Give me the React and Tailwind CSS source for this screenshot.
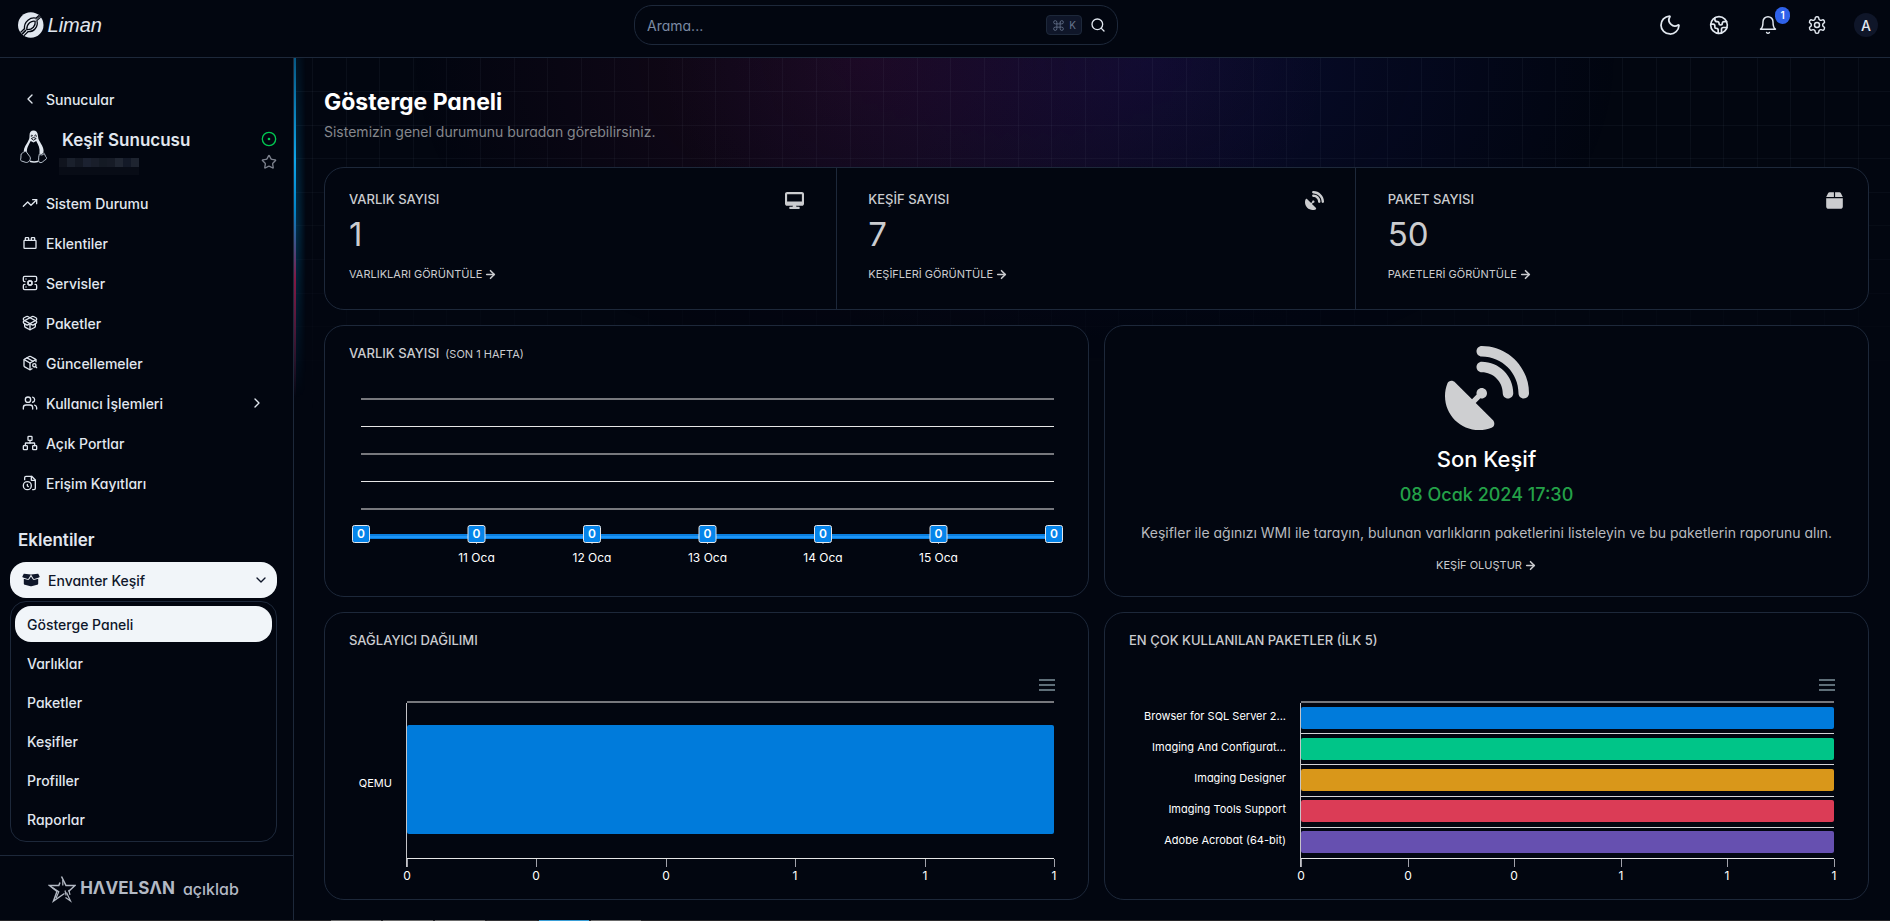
import React from "react";
import {
  ArrowRight, ChevronDown, ChevronLeft, ChevronRight, Command, Earth, Moon,
  Network, PackageSearch, Search, ServerCog, Star, ToyBrick, TrendingUp, Users,
} from "lucide-react";
import { FaBox, FaBoxOpen, FaDesktop, FaSatelliteDish } from "react-icons/fa6";

function Line({ size = 16, width = 2, className, children }) {
  return (
    <svg width={size} height={size} viewBox="0 0 24 24" fill="none" stroke="currentColor" strokeWidth={width}
      strokeLinecap="round" strokeLinejoin="round" className={className} aria-hidden="true">
      {children}
    </svg>
  );
}

const PackageOpenIcon = (p) => (
  <Line {...p}>
    <path d="M20.91 8.84 8.56 2.23a1.93 1.93 0 0 0-1.81 0L3.1 4.13a2.12 2.12 0 0 0-.05 3.69l12.22 6.93a2 2 0 0 0 1.94 0L21 12.51a2.12 2.12 0 0 0-.09-3.67Z" />
    <path d="m3.09 8.84 12.35-6.61a1.93 1.93 0 0 1 1.81 0l3.65 1.9a2.12 2.12 0 0 1 .1 3.69L8.73 14.75a2 2 0 0 1-1.94 0L3 12.51a2.12 2.12 0 0 1 .09-3.67Z" />
    <path d="M12 22V13" />
    <path d="M20 13.5v3.37a2.06 2.06 0 0 1-1.11 1.83l-6 3.08a1.93 1.93 0 0 1-1.78 0l-6-3.08A2.06 2.06 0 0 1 4 16.87V13.5" />
  </Line>
);

const FileClockIcon = (p) => (
  <Line {...p}>
    <path d="M16 22h2a2 2 0 0 0 2-2V7.5L14.5 2H6a2 2 0 0 0-2 2v3" />
    <path d="M14 2v6h6" />
    <circle cx="8" cy="16" r="6" />
    <path d="M9.5 17.5 8 16.25V14" />
  </Line>
);

const BellIcon = (p) => (
  <Line {...p}>
    <path d="M6 8a6 6 0 0 1 12 0c0 7 3 9 3 9H3s3-2 3-9" />
    <path d="M10.3 21a1.94 1.94 0 0 0 3.4 0" />
  </Line>
);

const GearIcon = (p) => (
  <Line {...p}>
    <path d="M12.22 2h-.44a2 2 0 0 0-2 2v.18a2 2 0 0 1-1 1.73l-.43.25a2 2 0 0 1-2 0l-.15-.08a2 2 0 0 0-2.73.73l-.22.38a2 2 0 0 0 .73 2.73l.15.1a2 2 0 0 1 1 1.72v.51a2 2 0 0 1-1 1.74l-.15.09a2 2 0 0 0-.73 2.73l.22.38a2 2 0 0 0 2.73.73l.15-.08a2 2 0 0 1 2 0l.43.25a2 2 0 0 1 1 1.73V20a2 2 0 0 0 2 2h.44a2 2 0 0 0 2-2v-.18a2 2 0 0 1 1-1.73l.43-.25a2 2 0 0 1 2 0l.15.08a2 2 0 0 0 2.73-.73l.22-.39a2 2 0 0 0-.73-2.73l-.15-.08a2 2 0 0 1-1-1.74v-.5a2 2 0 0 1 1-1.74l.15-.09a2 2 0 0 0 .73-2.73l-.22-.38a2 2 0 0 0-2.73-.73l-.15.08a2 2 0 0 1-2 0l-.43-.25a2 2 0 0 1-1-1.73V4a2 2 0 0 0-2-2z" />
    <circle cx="12" cy="12" r="3" />
  </Line>
);

function LimanMark() {
  return (
    <svg width="32" height="32" viewBox="0 0 32 32" aria-hidden="true">
      <defs><clipPath id="disc"><circle cx="16" cy="16" r="16" /></clipPath></defs>
      <circle cx="16" cy="16" r="16" fill="#e1e7ef" />
      <g clipPath="url(#disc)" fill="none" stroke="#020610" strokeWidth="1.600" strokeLinejoin="round">
        <path d="M2.500 26 8 20.800" />
        <path d="M4.500 28 10 22.500" strokeWidth="2" />
        <path d="M7 30 12.500 24.500" />
        <path d="M8.300 21.500c-.8-4.700 1-8.800 4.200-11.500 3.300-2.700 7-3.200 10-2.500L27 3.500" />
        <path d="M12 24.300c4 .4 7.300-.9 9.500-3.600 2.600-3 3.200-6.700 2.200-10.200L29 5.500" />
        <path d="M11 21.800c-.2-3.800 1.200-6.600 3.500-8.600 2.200-1.800 4.800-2.400 7-1.900.4 2.800-.3 5.400-2.200 7.500-2 2.200-4.800 3.300-8.300 3z" />
        <path d="M22 9.500 28 4.500" strokeWidth="1" />
      </g>
    </svg>
  );
}

function Tux() {
  return (
    <svg width="27" height="34" viewBox="0 0 27 34" aria-hidden="true">
      <path d="M9.500 5.500C9.500 2 11 .5 13.500.5S17.800 2.300 18 6c.1 3.500 1.500 5 3 7.700 1.600 2.800 3.200 5.300 2.400 9.300l-2.600 1.500-1.300-1.500c.6-4.500-1-8-3.300-12l-2.700 1.500-2.800-1.500C8.500 15.500 6.500 18 7 22l-1.300-.7-2-.1c.3-4.200 2.600-6.400 4-9.200C9 9.500 9.600 8.500 9.500 5.500z" fill="#e1e7ef" />
      <path d="M11.400 6.800c-.6-1.800.9-2.500 1.300-.6M14.500 6.300c.4-2.100 2.300-1.500 1.700.6M11.300 8.500l2.300-1 2.600 1-2.600 1.700z" fill="none" stroke="#020610" strokeWidth=".9" />
      <path d="M3.500 22.200 5.700 21l4.200 5.700c1 1.500.4 3.300-.9 4.500-1 1-2 1.500-3.200 1.200L1.500 31C.2 30.400.5 29.500.9 28c.3-1.500-.2-3 .3-4 .5-.8 1.600-.9 2.300-1.800z" fill="none" stroke="#cbd5e1" strokeWidth=".9" />
      <path d="M19.400 23.800c-.7 2.200-.9 4.500-.8 6.700.1 2 2 2.800 3.700 1.600 1.200-1.200 2.700-2 3.800-2.900 1-.9.4-1.700-.4-2.600-.9-1-.6-2.300-1.500-3.200-1.400 2-3.500 2.100-4.800.4z" fill="none" stroke="#cbd5e1" strokeWidth=".9" />
      <path d="M9.800 31.300c2.800.9 5.800.9 8.600 0" stroke="#e1e7ef" strokeWidth="1.500" fill="none" />
    </svg>
  );
}

function BrandStar() {
  return (
    <svg width="28" height="28" viewBox="0 0 28 28" fill="none" stroke="#b3b9c4" strokeWidth="1.500" aria-hidden="true">
      <path d="M13.500 1.500 18 10.500h9l-6.500 6" />
      <path d="M12 7.500 10.800 10.500H1.500l7.500 6L5.500 26l8-5.500 3-2" />
      <path d="M18.500 17.500 22.500 26l-5-3.500M14.800 5v5.500M4 12.200l6.800 4.500L8 23.200" strokeWidth="1.200" />
      <path d="m20.800 14.800 1.200 5M17 15.500l1.200 5" strokeWidth="1.200" />
    </svg>
  );
}

const nav = [
  { label: "Sistem Durumu", icon: TrendingUp },
  { label: "Eklentiler", icon: ToyBrick },
  { label: "Servisler", icon: ServerCog },
  { label: "Paketler", icon: PackageOpenIcon },
  { label: "Güncellemeler", icon: PackageSearch },
  { label: "Kullanıcı İşlemleri", icon: Users, more: true },
  { label: "Açık Portlar", icon: Network },
  { label: "Erişim Kayıtları", icon: FileClockIcon },
];

const subNav = ["Gösterge Paneli", "Varlıklar", "Paketler", "Keşifler", "Profiller", "Raporlar"];

const maskTiles = [
  "bg-[#10141e]", "bg-[#1a202c]", "bg-[#131823]", "bg-[#1b2130]", "bg-[#191e2a]",
  "bg-[#141a24]", "bg-[#161b26]", "bg-[#202632]", "bg-[#131927]", "bg-[#1e2430]",
];

function Header() {
  return (
    <header className="flex h-[58px] shrink-0 items-start justify-between border-b border-[#1d283a] pr-1 pl-[18px]">
      <a href="#home" aria-label="Liman" className="flex w-[84px] items-center gap-1 pt-[9px] text-[#e1e7ef]">
        <LimanMark />
        <span className="font-['Liberation_Sans_Narrow','Liberation_Sans',sans-serif] text-[20px] leading-8 italic">Liman</span>
      </a>
      <label className="mt-[5px] flex h-10 w-[484px] items-center rounded-[18px] border border-[#1d283a] pr-[11px] pl-3">
        <input type="text" aria-label="Arama" placeholder="Arama..."
          className="min-w-0 flex-1 bg-transparent text-[14px] text-slate-200 outline-none placeholder:text-[#7b8aa3]" />
        <kbd className="mr-2 flex h-5 w-9 items-center justify-center gap-1 rounded border border-[#1d283a] bg-[#0f1629] text-[#66748c]">
          <Command size={13} strokeWidth={1.5} />
          <span className="font-['Inter',sans-serif] text-[10px]">K</span>
        </kbd>
        <Search size={16} className="text-[#e1e7ef]" />
      </label>
      <div className="flex items-center gap-[9px] pt-[5px] text-[#e1e7ef]">
        <button aria-label="Tema" className="grid size-10 place-items-center"><Moon size={24} strokeWidth={1.75} /></button>
        <button aria-label="Dil" className="grid size-10 place-items-center"><Earth size={20} /></button>
        <button aria-label="Bildirimler" className="relative grid size-10 place-items-center">
          <BellIcon size={20} width={1.75} />
          <span className="absolute top-0.5 -right-0.5 grid h-[17px] w-[15px] place-items-center rounded-full bg-[#2f62ea] text-[10px] font-semibold text-white">1</span>
        </button>
        <button aria-label="Ayarlar" className="grid size-10 place-items-center"><GearIcon size={20} width={1.75} /></button>
        <button aria-label="Hesap" className="grid size-10 place-items-center">
          <span className="grid size-6 place-items-center rounded-full bg-[#0f1629] text-[14px] font-medium">A</span>
        </button>
      </div>
    </header>
  );
}

function Sidebar() {
  return (
    <aside className="flex w-[294px] shrink-0 flex-col border-r border-[#1d283a] text-[14px] font-medium text-[#e1e7ef]">
      <div className="flex-1 pt-[23px] pr-4 pl-2.5">
        <a href="#sunucular" className="flex h-9 items-center gap-2 px-3"><ChevronLeft size={16} />Sunucular</a>
        <div className="mt-[13px] flex pl-2.5">
          <Tux />
          <div className="ml-3 flex-1">
            <h2 className="pl-[3px] text-[17px] leading-5 font-semibold">Keşif Sunucusu</h2>
            <div className="mt-2 flex">
              {maskTiles.map((c, i) => <span key={i} className={"h-[9px] w-2 " + c} />)}
            </div>
            <div className="h-2 w-20 bg-[#080c16]" />
          </div>
          <div className="flex w-4 flex-col gap-[7px]">
            <Line className="mt-px text-green-500"><circle cx="12" cy="12" r="10" /><circle cx="12" cy="12" r="1" /></Line>
            <Star size={16} className="text-[#7c818d]" />
          </div>
        </div>
        <nav className="mt-2.5 flex flex-col gap-1">
          {nav.map(({ label, icon: Icon, more }) => (
            <a key={label} href="#nav" className="flex h-9 items-center gap-2 px-3">
              <Icon size={16} />
              <span className="flex-1">{label}</span>
              {more && <ChevronRight size={16} />}
            </a>
          ))}
        </nav>
        <h3 className="mt-[25px] px-2 text-[17px] leading-7 font-semibold">Eklentiler</h3>
        <button className="mt-2 flex h-9 w-full items-center rounded-2xl bg-[#f1f5f9] px-3 text-left text-[#0f172a]">
          <FaBoxOpen size={18} />
          <span className="flex-1 pl-2">Envanter Keşif</span>
          <ChevronDown size={16} className="-mr-1" />
        </button>
        <nav className="mt-[3px] flex flex-col gap-[3px] rounded-2xl border border-[#1d283a] p-1">
          {subNav.map((label, i) => (
            <a key={label} href="#sub" className={i === 0
              ? "flex h-9 items-center rounded-2xl bg-[#f1f5f9] px-3 text-[#0f172a]"
              : "flex h-9 items-center px-3"}>{label}</a>
          ))}
        </nav>
      </div>
      <footer className="flex h-[65px] items-center justify-center gap-1 border-t border-[#1d283a] pt-px pr-1.5 text-[#b3b9c4]">
        <BrandStar />
        <span className="text-[17px] font-bold">HΛVELSΛN</span>
        <span className="ml-1 text-[16px] font-medium">açıklab</span>
      </footer>
    </aside>
  );
}

function Backdrop() {
  return (
    <div className="pointer-events-none absolute inset-0 -z-10 overflow-hidden" aria-hidden="true">
      <div className="absolute inset-x-0 top-0 h-[340px] bg-[radial-gradient(ellipse_460px_320px_at_36%_0%,rgba(190,24,93,0.13),transparent),radial-gradient(ellipse_480px_330px_at_53%_0%,rgba(49,46,229,0.15),transparent)] mask-[linear-gradient(to_bottom,black_30%,transparent)]" />
      <svg className="absolute inset-x-0 top-0 h-[360px] w-full mask-[linear-gradient(to_bottom,black_20%,transparent)]">
        <defs>
          <pattern id="grid" x="18" y="33" width="168" height="168" patternUnits="userSpaceOnUse">
            <path d="M.5 0v168M34.500 0v168M67.500 0v168M101.500 0v168M134.500 0v168M0 .5h168M0 34.500h168M0 67.500h168M0 101.500h168M0 134.500h168" stroke="#94a3b8" strokeOpacity=".06" />
          </pattern>
        </defs>
        <rect width="100%" height="100%" fill="url(#grid)" />
      </svg>
      <div className="absolute top-0 left-0 h-[340px] w-3 bg-linear-to-b from-sky-500/10 via-sky-500/30 to-transparent mask-[linear-gradient(to_right,black,transparent)]" />
      <div className="absolute top-0 left-0 h-[340px] w-0.5 bg-[linear-gradient(to_bottom,#075985,#0ea5e9_30%,#0284c7_45%,#831843_65%,transparent)]" />
    </div>
  );
}

function MoreLink({ children }) {
  return (
    <a href="#detay" className="inline-flex items-center gap-0.5 text-[11px] leading-4 text-[#cbcccf]">
      {children}<ArrowRight size={13} strokeWidth={3} />
    </a>
  );
}

function Stat({ label, value, link, icon: Icon, className }) {
  return (
    <div className={"flex justify-between pt-[23px] " + className}>
      <div>
        <h2 className="text-[13px] leading-4 font-medium text-[#cbcccf]">{label}</h2>
        <p className="mt-[7px] text-[33px] leading-10 text-[#cbcccf]">{value}</p>
        <div className="mt-3 flex"><MoreLink>{link}</MoreLink></div>
      </div>
      <Icon size={19} className="text-[#cbcccf]" />
    </div>
  );
}

const card = "rounded-[20px] border border-[#1d283a] bg-[#020610]";
const cardTitle = "text-[13px] leading-4 font-medium text-[#cbcccf]";

const week = ["", "11 Oca", "12 Oca", "13 Oca", "14 Oca", "15 Oca", ""];

function LineChart() {
  return (
    <svg viewBox="0 0 763 210" className="h-auto w-full" role="img" aria-label="Varlık sayısı">
      {[12, 67, 122].map((y) => <rect key={y} x="36" y={y} width="693" height="2" fill="#77787d" />)}
      {[40, 95].map((y) => <rect key={y} x="36" y={y} width="693" height="1" fill="#e6e6e6" />)}
      <rect x="36" y="148" width="693" height="5" fill="#0a7fe0" />
      <rect x="36" y="150" width="693" height="2" fill="#1e96f8" />
      {week.map((d, i) => {
        const x = 36 + i * 115.5;
        return (
          <g key={i} textAnchor="middle">
            {d && <rect x={x - 0.5} y="156" width="1" height="2" fill="#9ca3af" />}
            <rect x={x - 8.5} y="139.500" width="17" height="17" rx="2" fill="#0584ea" stroke="#e5e7eb" />
            <text x={x} y="152" fontSize="12" fontWeight="600" fill="#fff">0</text>
            <text x={x} y="176" fontSize="12" fill="#fff">{d}</text>
          </g>
        );
      })}
    </svg>
  );
}

function ChartMenu() {
  return (
    <button aria-label="Menü" className="flex w-4 flex-col gap-[3px]">
      <span className="h-0.5 w-full bg-[#5f6f79]" />
      <span className="h-0.5 w-full bg-[#5f6f79]" />
      <span className="h-0.5 w-full bg-[#5f6f79]" />
    </button>
  );
}

const axisValues = ["0", "0", "0", "1", "1", "1"];

function BarChart({ left, bars, title }) {
  const band = 156 / bars.length;
  const width = 729 - left;
  const thick = band * 0.7;
  return (
    <svg viewBox="0 0 763 198" className="h-auto w-full" role="img" aria-label={title}>
      <rect x={left} y="0" width={width} height="2" fill="#77787d" />
      {bars.map((b, i) => (
        <g key={b.name}>
          {i > 0 && <rect x={left} y={Math.round(band * i + 1)} width={width} height="1" fill="#d4d4d8" />}
          <rect x={left} y={Math.round(band * i + (band - thick) / 2 + 1)} width={width} height={Math.round(thick)} rx="2" fill={b.color} />
          <text x={left - 15} y={band * (i + 0.5) + b.shift} fontSize="11" textAnchor="end" fill="#fff">{b.name}</text>
        </g>
      ))}
      <rect x={left - 1} y="2" width="1" height="164" fill="#c4c4c8" />
      <rect x={left} y="157" width={width} height="1" fill="#e6e6e6" />
      {axisValues.map((v, i) => {
        const x = Math.round(left + (width / 5) * i);
        return (
          <g key={i}>
            <rect x={x} y="158" width="1" height="8" fill="#a1a1aa" />
            <text x={x} y="179" fontSize="12" textAnchor="middle" fill="#fff">{v}</text>
          </g>
        );
      })}
    </svg>
  );
}

const vendorBars = [{ name: "QEMU", color: "#007bdb", shift: 8 }];
const packageBars = [
  { name: "Browser for SQL Server 2...", color: "#007bdb", shift: 3 },
  { name: "Imaging And Configurat...", color: "#00c588", shift: 3 },
  { name: "Imaging Designer", color: "#d9971a", shift: 3 },
  { name: "Imaging Tools Support", color: "#db3c56", shift: 3 },
  { name: "Adobe Acrobat (64-bit)", color: "#6650b0", shift: 3 },
];

function BarCard({ title, left, bars }) {
  return (
    <section className={card + " pt-[19px]"}>
      <h2 className={cardTitle + " px-6"}>{title}</h2>
      <div className="mt-[31px] mb-2.5 flex justify-end pr-[33px]"><ChartMenu /></div>
      <BarChart left={left} bars={bars} title={title} />
    </section>
  );
}

function Dashboard() {
  return (
    <main className="relative isolate flex-1 pt-7 pr-[21px] pb-5 pl-[30px]">
      <Backdrop />
      <h1 className="text-[23px] leading-8 font-bold text-white">Gösterge Paneli</h1>
      <p className="mt-1 text-[14px] leading-5 text-[#85878c]">Sistemizin genel durumunu buradan görebilirsiniz.</p>
      <section className={card + " mt-[25px] grid h-[143px] grid-cols-[512fr_519fr_514fr]"}>
        <Stat label="VARLIK SAYISI" value="1" link="VARLIKLARI GÖRÜNTÜLE" icon={FaDesktop} className="pr-8 pl-6" />
        <Stat label="KEŞİF SAYISI" value="7" link="KEŞİFLERİ GÖRÜNTÜLE" icon={FaSatelliteDish} className="border-l border-[#1d283a] px-[31px]" />
        <Stat label="PAKET SAYISI" value="50" link="PAKETLERİ GÖRÜNTÜLE" icon={FaBox} className="border-l border-[#1d283a] pr-6 pl-8" />
      </section>
      <div className="mt-[15px] grid grid-cols-2 gap-[15px]">
        <section className={card + " pt-[19px]"}>
          <h2 className={cardTitle + " flex h-4 items-baseline gap-1.5 px-6"}>
            VARLIK SAYISI <span className="text-[11px] font-normal">(SON 1 HAFTA)</span>
          </h2>
          <div className="mt-[25px]"><LineChart /></div>
        </section>
        <section className={card + " flex flex-col items-center pt-5"}>
          <FaSatelliteDish size={84} className="text-[#cecfd1]" />
          <h2 className="mt-[15px] text-[22px] leading-7 font-medium text-white">Son Keşif</h2>
          <p className="mt-2.5 text-[18px] leading-6 font-medium text-[#24a148]">08 Ocak 2024 17:30</p>
          <p className="mt-3.5 text-[14px] leading-6 text-[#b8babf]">Keşifler ile ağınızı WMI ile tarayın, bulunan varlıkların paketlerini listeleyin ve bu paketlerin raporunu alın.</p>
          <div className="mt-3 flex"><MoreLink>KEŞİF OLUŞTUR</MoreLink></div>
        </section>
        <BarCard title="SAĞLAYICI DAĞILIMI" left={82} bars={vendorBars} />
        <BarCard title="EN ÇOK KULLANILAN PAKETLER (İLK 5)" left={196} bars={packageBars} />
      </div>
    </main>
  );
}

const strip = ["bg-[#6b6b6b]", "bg-[#6b6b6b]", "bg-[#6b6b6b]", "bg-[#333336]", "bg-[#3aa0d8]", "bg-[#6b6b6b]"];

export default function App() {
  return (
    <div lang="tr" className="flex min-h-screen flex-col bg-[#020610] font-['Inter',sans-serif] [font-feature-settings:'cv11']">
      <Header />
      <div className="flex flex-1">
        <Sidebar />
        <Dashboard />
      </div>
      <div className="flex h-px gap-0.5 bg-[#27272a] pl-[331px]" aria-hidden="true">
        {strip.map((c, i) => <span key={i} className={"w-[50px] " + c} />)}
      </div>
    </div>
  );
}
